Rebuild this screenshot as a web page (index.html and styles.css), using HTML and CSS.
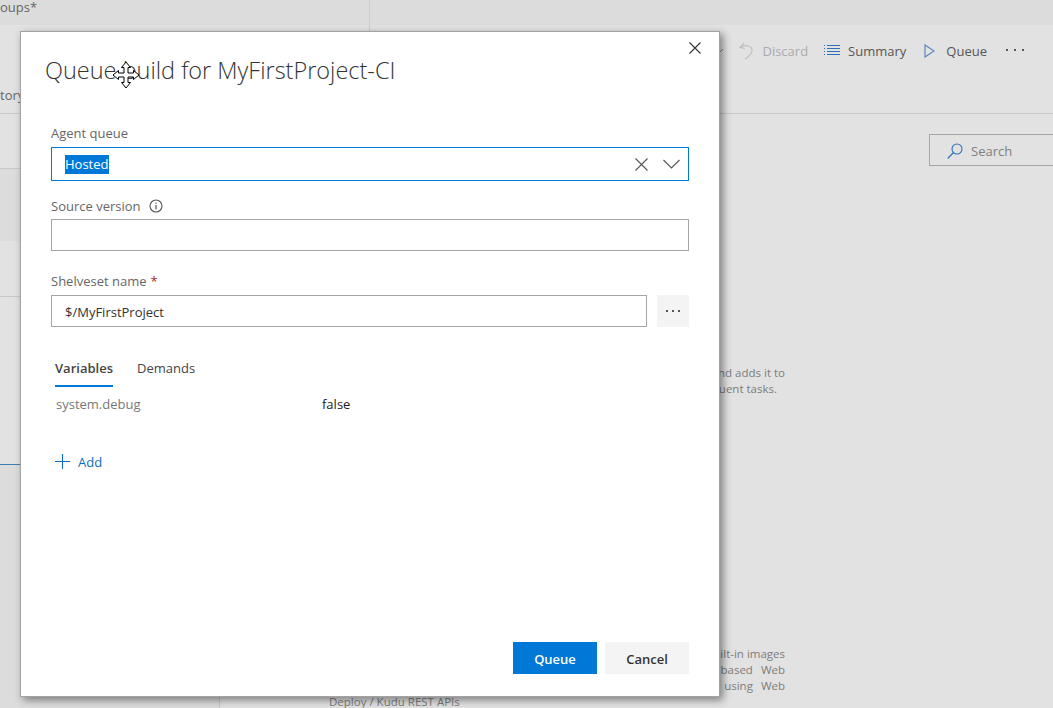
FILE: index.html
```html
<!DOCTYPE html>
<html lang="en">
<head>
<meta charset="utf-8">
<title>Queue build</title>
<link rel="stylesheet" href="styles.css">
</head>
<body>
<div class="page">
  <header class="topbar">
    <div class="tab-groups">oups*</div>
  </header>
  <div class="toolbar">
    <div class="tab-history">tory</div>
    <div class="actions">
      <svg class="chev-mini" width="8" height="5" viewBox="0 0 8 5"><path d="M1 1l3 3 3-3" fill="none" stroke="#8a8a8a"/></svg>
      <span class="action disabled">
        <svg width="14" height="18" viewBox="0 0 14 18"><path d="M5 1L1 5.500l4.500 1M1.500 5.500C7 2 13 4 13 8.500c0 3-2.500 5.500-7 8.500" fill="none" stroke="#c0c0c0" stroke-width="1.200"/></svg>
        Discard
      </span>
      <span class="action summary">
        <svg width="16" height="13" viewBox="0 0 16 13"><path d="M0 1.500h1M3 1.500h13M0 4.500h1M3 4.500h13M0 7.500h1M3 7.500h13M0 10.500h1M3 10.500h13" fill="none" stroke="#2a72bd"/></svg>
        Summary
      </span>
      <span class="action play">
        <svg width="11" height="14" viewBox="0 0 11 14"><path d="M1 1l9 6-9 6z" fill="none" stroke="#5f85c0" stroke-width="1.200"/></svg>
        Queue
      </span>
      <span class="dots" aria-hidden="true"><i></i><i></i><i></i></span>
    </div>
  </div>
  <div class="body">
    <aside class="side">
      <div class="side-row"></div>
      <div class="side-row dark"></div>
      <div class="side-row tall"></div>
      <div class="side-list"></div>
      <div class="side-rest"></div>
    </aside>
    <main class="main">
      <div class="search">
        <svg width="16" height="16" viewBox="0 0 16 16"><circle cx="10" cy="6" r="5" fill="none" stroke="#2a72bd" stroke-width="1.100"/><path d="M6.500 9.500L.7 15.500" stroke="#2a72bd" stroke-width="1.100"/></svg>
        <span>Search</span>
      </div>
      <p class="desc first">nd adds it to<br><span class="short">uent tasks.</span></p>
      <p class="desc second">ilt-in images<br><span class="wide">based</span>Web<br><span class="wide">using</span>Web</p>
      <p class="desc third">Deploy / Kudu REST APIs</p>
    </main>
  </div>

  <section class="dialog">
    <button class="close" aria-label="Close">
      <svg width="12" height="12" viewBox="0 0 12 12"><path d="M.5.500l11 11M11.500.500l-11 11" stroke="#333" stroke-width="1.100"/></svg>
    </button>
    <h1 class="title">Queue build for MyFirstProject-CI</h1>
    <form class="form">
      <div class="label l-agent">Agent queue</div>
      <div class="field focus">
        <span class="selected">Hosted</span>
        <svg class="fi-x" width="13" height="13" viewBox="0 0 13 13"><path d="M.5.500l12 12M12.500.500l-12 12" stroke="#555" stroke-width="1.100"/></svg>
        <svg class="fi-chev" width="17" height="10" viewBox="0 0 17 10"><path d="M.5 1l8 8 8-8" fill="none" stroke="#555" stroke-width="1.100"/></svg>
      </div>
      <div class="label l-source">Source version
        <svg class="info" width="14" height="14" viewBox="0 0 14 14"><circle cx="7" cy="7" r="6" fill="none" stroke="#555" stroke-width="1.100"/><path d="M7 6v4.500" stroke="#555" stroke-width="1.200"/><path d="M7 3.500v1.200" stroke="#555" stroke-width="1.200"/></svg>
      </div>
      <div class="field"></div>
      <div class="label l-shelve">Shelveset name <b class="req">*</b></div>
      <div class="field-row">
        <div class="field grow">$/MyFirstProject</div>
        <div class="more" aria-hidden="true"><i></i><i></i><i></i></div>
      </div>
      <nav class="tabs">
        <span class="tab active">Variables</span>
        <span class="tab">Demands</span>
      </nav>
      <div class="var-row">
        <span class="var-name">system.debug</span>
        <span class="var-value">false</span>
      </div>
      <div class="add">
        <svg width="15" height="15" viewBox="0 0 15 15"><path d="M7.500 0v15M0 7.500h15" stroke="#0a6cc4" stroke-width="1.100"/></svg>
        <span class="add-text">Add</span>
      </div>
    </form>
    <footer class="buttons">
      <button type="button" class="btn primary">Queue</button>
      <button type="button" class="btn">Cancel</button>
    </footer>
  </section>

  <svg class="cursor" width="28" height="28" viewBox="0 0 28 28"><path d="M14 1l4.500 5.500H16V12h5.500V9.500L27 14l-5.500 4.500V16H16v5.500h2.500L14 27l-4.500-5.500H12V16H6.500v2.500L1 14l5.500-4.500V12H12V6.500H9.500z" fill="#fff" stroke="#000" stroke-width="1"/></svg>
</div>
</body>
</html>
```
FILE: styles.css
```css
* { box-sizing: border-box; }
html, body { margin: 0; padding: 0; }
body { font-family: "Open Sans", "Liberation Sans", sans-serif; font-size: 13px; color: #333; }
.page { position: relative; width: 1053px; height: 708px; overflow: hidden; background: #e2e2e2; display: flex; flex-direction: column; }

.topbar { height: 25px; background: #dcdcdc; flex: none; }
.tab-groups { width: 370px; height: 31px; border-right: 1px solid #cfcfcf; line-height: 14px; color: #666; }
.toolbar { height: 89px; flex: none; border-bottom: 1px solid #c8c8c8; display: flex; justify-content: space-between; }
.tab-history { width: 20px; white-space: nowrap; padding-top: 61px; color: #666; }
.actions { display: flex; align-items: center; height: 51px; padding-right: 29px; color: #555; }
.chev-mini { margin-right: 15px; }
.action { display: inline-flex; align-items: center; gap: 9px; margin-right: 16px; white-space: nowrap; }
.action.disabled { color: #ababab; }
.action.summary { margin-right: 18px; gap: 8px; }
.action.play { gap: 11px; margin-right: 19px; }
.dots { display: inline-flex; gap: 6px; margin-top: -2px; }
.dots i { width: 2px; height: 2px; background: #555; }

.body { flex: 1; display: flex; min-height: 0; }
.side { width: 220px; flex: none; border-right: 1px solid #c8c8c8; display: flex; flex-direction: column; }
.side-row { height: 55px; border-bottom: 1px solid #c8c8c8; }
.side-row.dark { height: 72px; background: #dcdcdc; border-bottom: 0; }
.side-row.tall { height: 56px; }
.side-list { height: 168px; border-bottom: 1px solid #3d7fb8; }
.side-rest { flex: 1; background: #dcdcdc; }
.main { flex: 1; min-width: 0; padding-left: 109px; display: flex; flex-direction: column; color: #7c7c7c; font-size: 11.5px; line-height: 16px; overflow: hidden; }
.search { margin: 20px -40px 0 600px; height: 32px; border: 1px solid #a6a6a6; padding: 2px 0 0 17px; display: flex; align-items: center; gap: 8px; font-size: 13px; color: #808080; flex: none; }
.desc { margin: 0; width: 456px; text-align: right; white-space: nowrap; }
.desc.first { margin-top: 199px; }
.short { margin-right: 8px; }
.desc.second { margin-top: 249px; }
.desc.third { text-align: left; }
.wide { margin-right: 8px; }

.dialog { position: absolute; left: 20px; top: 31px; width: 700px; height: 666px; background: #fff; border: 1px solid #a3a3a3; box-shadow: 3px 3px 8px rgba(0,0,0,.45); padding: 0 30px; display: flex; flex-direction: column; }
.close { position: absolute; right: 17px; top: 9px; width: 14px; height: 14px; padding: 1px; border: 0; background: none; line-height: 0; }
.title { margin: 20px 0 0 -6px; font-size: 23.5px; line-height: 36px; font-weight: 300; color: #333; white-space: nowrap; }
.form { flex: 1; display: flex; flex-direction: column; }
.label { color: #666; line-height: 18px; display: flex; align-items: center; gap: 8px; }
.l-agent { margin-top: 36px; margin-bottom: 1px; }
.l-source { margin-top: 16px; }
.l-shelve { margin-top: 21px; gap: 4px; }
.req { color: #a4262c; font-weight: 400; }
.field { height: 32px; border: 1px solid #a6a6a6; margin-top: 4px; padding: 1px 0 0 13px; line-height: 31px; color: #333; position: relative; }
.field.focus { height: 34px; padding-top: 0; border-color: #0078d7; display: flex; align-items: center; }
.selected { background: #0078d7; color: #fff; line-height: 19px; }
.fi-x { position: absolute; right: 40px; top: 10px; }
.fi-chev { position: absolute; right: 8px; top: 11px; }
.field-row { display: flex; gap: 10px; margin-top: 5px; }
.field-row .field { margin-top: 0; }
.grow { flex: 1; }
.more { width: 32px; height: 32px; background: #f4f4f4; display: flex; align-items: center; justify-content: center; gap: 4px; }
.more i { width: 2px; height: 2px; background: #555; }
.tabs { display: flex; gap: 24px; margin: 27px 0 0 4px; }
.tab { height: 33px; line-height: 28px; color: #444; }
.tab.active { font-weight: 600; border-bottom: 2px solid #0078d7; }
.var-row { display: flex; margin: 8px 0 0 5px; line-height: 18px; }
.var-name { width: 266px; color: #777; }
.var-value { color: #222; }
.add { display: flex; align-items: center; gap: 8px; margin: 39px 0 0 4px; color: #0a6cc4; line-height: 18px; }
.add-text { margin-top: 1px; }
.buttons { display: flex; justify-content: flex-end; gap: 8px; margin-bottom: 22px; }
.btn { width: 84px; height: 32px; border: 0; background: #f4f4f4; color: #333; font: 600 13px "Open Sans", "Liberation Sans", sans-serif; padding: 1px 0 0; }
.btn.primary { background: #0078d7; color: #fff; }
.cursor { position: absolute; left: 112px; top: 61px; }
```
